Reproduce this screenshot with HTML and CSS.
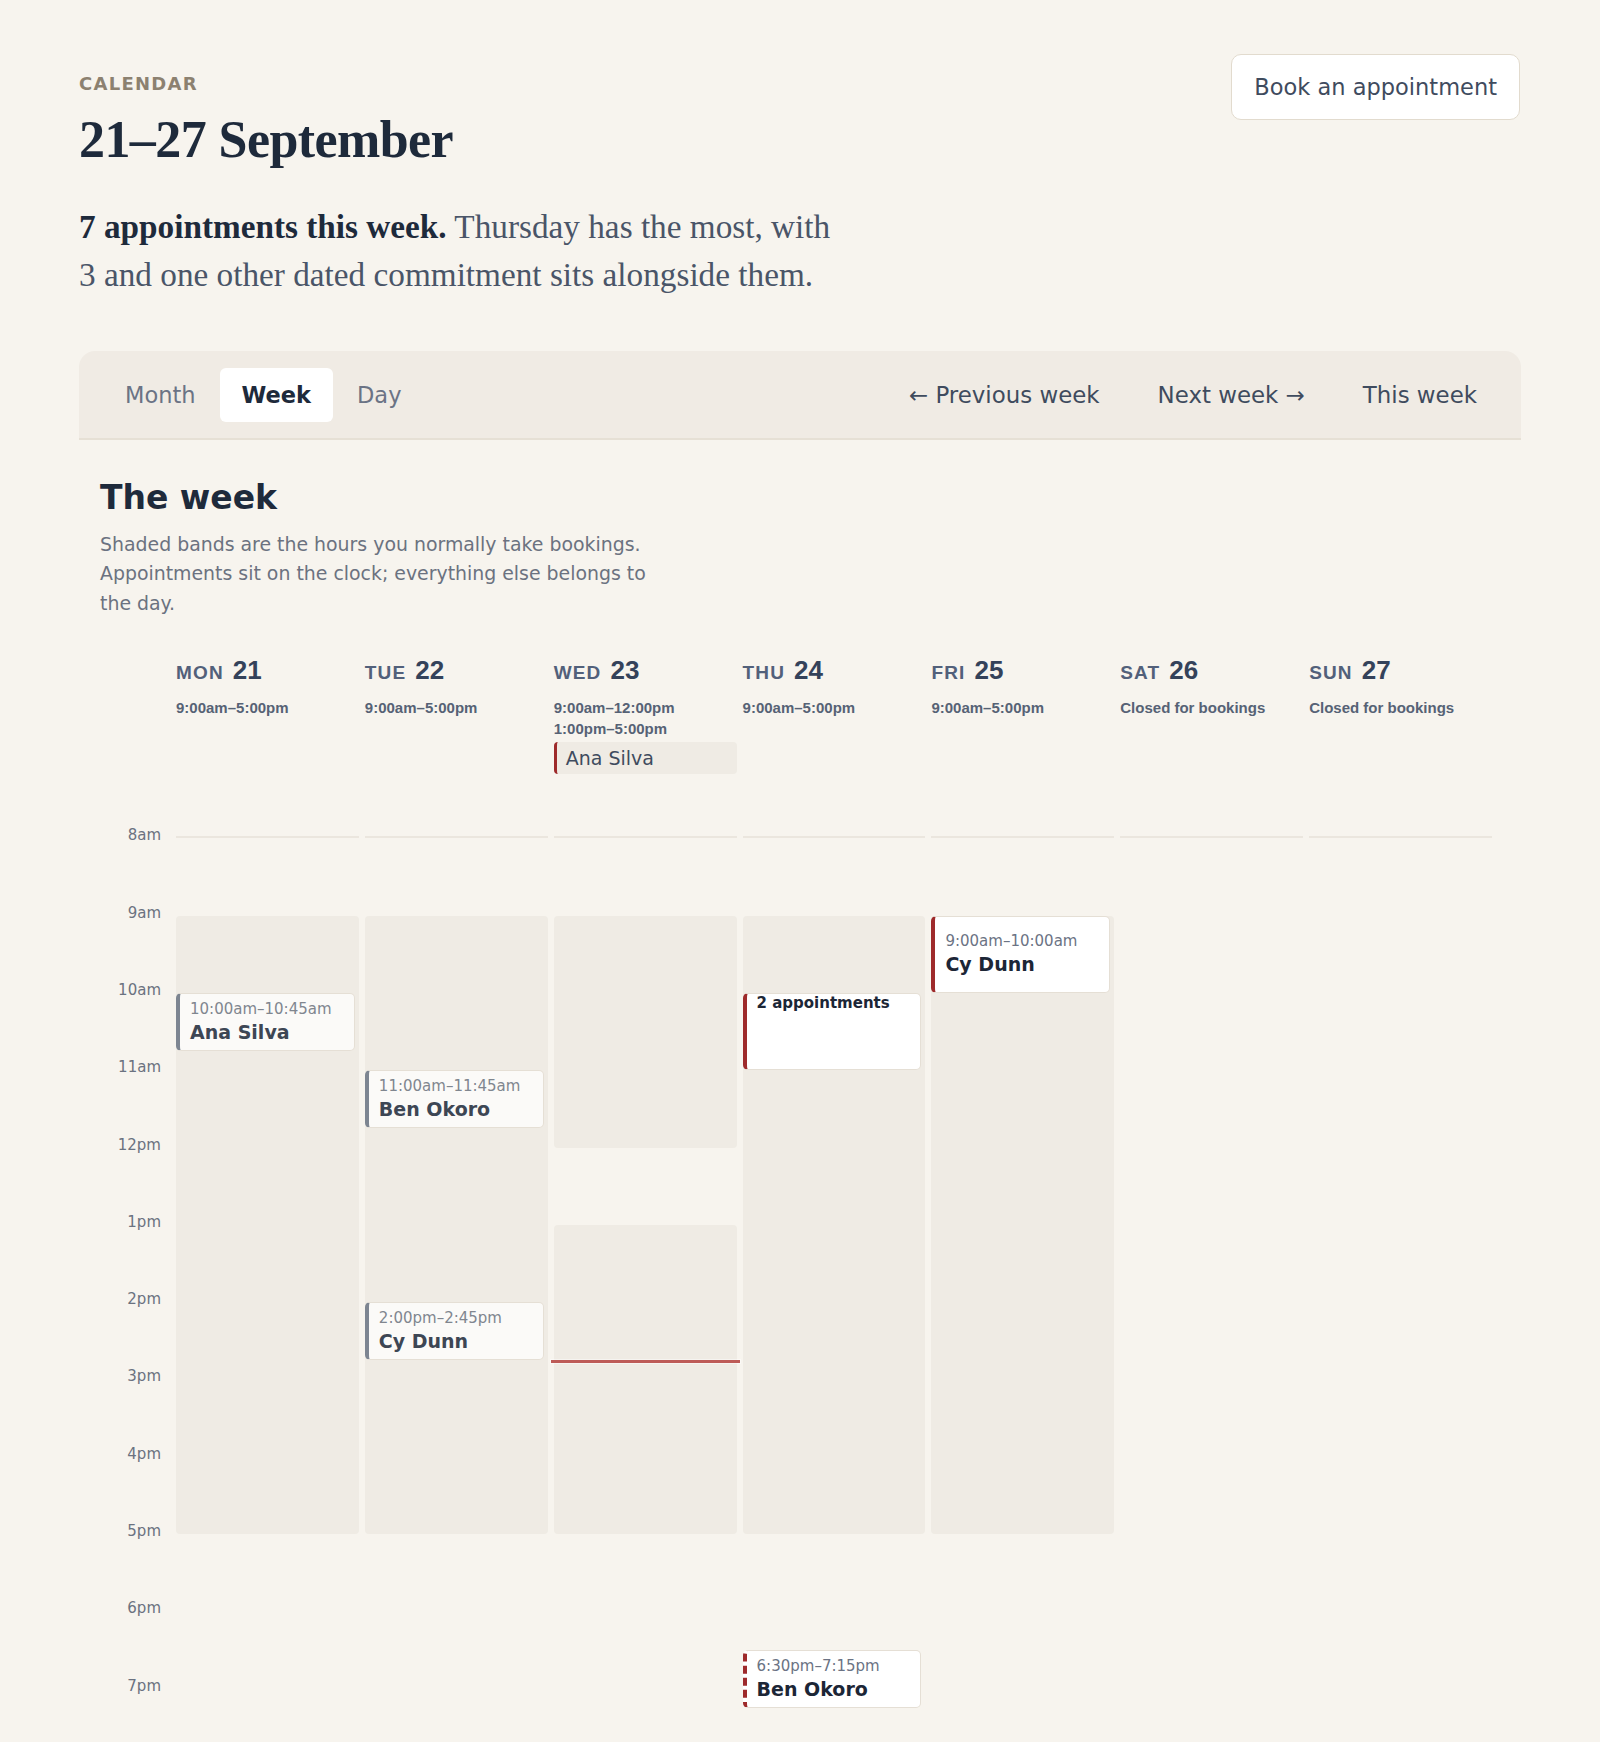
FILE: index.html
```html
<!DOCTYPE html>
<html lang="en">
<head>
<meta charset="utf-8">
<title>Calendar – 21–27 September</title>
<link rel="stylesheet" href="styles.css">
</head>
<body>
<div class="page">
  <header class="top">
    <div class="intro">
      <div class="eyebrow">CALENDAR</div>
      <h1 class="title">21–27 September</h1>
      <p class="summary"><strong>7 appointments this week.</strong> Thursday has the most, with 3 and one other dated commitment sits alongside them.</p>
    </div>
    <button class="btn-book" type="button">Book an appointment</button>
  </header>

  <nav class="toolbar">
    <div class="tabs">
      <button class="tab" type="button">Month</button>
      <button class="tab active" type="button">Week</button>
      <button class="tab" type="button">Day</button>
    </div>
    <div class="nav">
      <button class="nav-btn" type="button">← Previous week</button>
      <button class="nav-btn" type="button">Next week →</button>
      <button class="nav-btn" type="button">This week</button>
    </div>
  </nav>

  <section class="week">
    <h2 class="week-title">The week</h2>
    <p class="lede">Shaded bands are the hours you normally take bookings. Appointments sit on the clock; everything else belongs to the day.</p>

    <div class="days">
      <div class="corner"></div>
      <div class="day">
        <div class="day-name"><span class="dow">MON</span><span class="dnum">21</span></div>
        <div class="hours">9:00am–5:00pm</div>
      </div>
      <div class="day">
        <div class="day-name"><span class="dow">TUE</span><span class="dnum">22</span></div>
        <div class="hours">9:00am–5:00pm</div>
      </div>
      <div class="day">
        <div class="day-name"><span class="dow">WED</span><span class="dnum">23</span></div>
        <div class="hours">9:00am–12:00pm<br>1:00pm–5:00pm</div>
        <div class="chip">Ana Silva</div>
      </div>
      <div class="day">
        <div class="day-name"><span class="dow">THU</span><span class="dnum">24</span></div>
        <div class="hours">9:00am–5:00pm</div>
      </div>
      <div class="day">
        <div class="day-name"><span class="dow">FRI</span><span class="dnum">25</span></div>
        <div class="hours">9:00am–5:00pm</div>
      </div>
      <div class="day">
        <div class="day-name"><span class="dow">SAT</span><span class="dnum">26</span></div>
        <div class="hours">Closed for bookings</div>
      </div>
      <div class="day">
        <div class="day-name"><span class="dow">SUN</span><span class="dnum">27</span></div>
        <div class="hours">Closed for bookings</div>
      </div>
    </div>

    <div class="grid">
      <div class="gutter">
        <span class="hr-label" style="--s:0">8am</span>
        <span class="hr-label" style="--s:1">9am</span>
        <span class="hr-label" style="--s:2">10am</span>
        <span class="hr-label" style="--s:3">11am</span>
        <span class="hr-label" style="--s:4">12pm</span>
        <span class="hr-label" style="--s:5">1pm</span>
        <span class="hr-label" style="--s:6">2pm</span>
        <span class="hr-label" style="--s:7">3pm</span>
        <span class="hr-label" style="--s:8">4pm</span>
        <span class="hr-label" style="--s:9">5pm</span>
        <span class="hr-label" style="--s:10">6pm</span>
        <span class="hr-label" style="--s:11">7pm</span>
      </div>

      <div class="col">
        <div class="band" style="--s:1;--d:8"></div>
        <div class="ev past" style="--s:2;--d:0.75">
          <span class="ev-time">10:00am–10:45am</span>
          <span class="ev-name">Ana Silva</span>
        </div>
      </div>

      <div class="col">
        <div class="band" style="--s:1;--d:8"></div>
        <div class="ev past" style="--s:3;--d:0.75">
          <span class="ev-time">11:00am–11:45am</span>
          <span class="ev-name">Ben Okoro</span>
        </div>
        <div class="ev past" style="--s:6;--d:0.75">
          <span class="ev-time">2:00pm–2:45pm</span>
          <span class="ev-name">Cy Dunn</span>
        </div>
      </div>

      <div class="col">
        <div class="band" style="--s:1;--d:3"></div>
        <div class="band" style="--s:5;--d:4"></div>
        <div class="now" style="--s:6.77"></div>
      </div>

      <div class="col">
        <div class="band" style="--s:1;--d:8"></div>
        <div class="ev cluster" style="--s:2;--d:1">
          <span class="ev-count">2 appointments</span>
        </div>
        <div class="ev tentative" style="--s:10.5;--d:0.75">
          <span class="ev-time">6:30pm–7:15pm</span>
          <span class="ev-name">Ben Okoro</span>
        </div>
      </div>

      <div class="col">
        <div class="band" style="--s:1;--d:8"></div>
        <div class="ev" style="--s:1;--d:1">
          <span class="ev-time">9:00am–10:00am</span>
          <span class="ev-name">Cy Dunn</span>
        </div>
      </div>

      <div class="col"></div>
      <div class="col"></div>
    </div>
  </section>
</div>
</body>
</html>
```

FILE: styles.css
```css
:root {
  --hr: 77.3px;
  --bg: #f7f4ee;
  --shade: #efebe4;
  --ink: #1e2a3b;
  --slate: #3f4b5e;
  --muted: #6b7280;
  --red: #9e2a2b;
}

* {
  box-sizing: border-box;
}

html,
body {
  margin: 0;
  background: var(--bg);
}

body {
  font-family: "DejaVu Sans", "Noto Sans", sans-serif;
  color: var(--ink);
}

button {
  font-family: inherit;
  cursor: pointer;
}

.page {
  width: 1442px;
  margin: 0 auto;
  padding-top: 54px;
}

/* ---------- header ---------- */
.top {
  display: flex;
  justify-content: space-between;
  align-items: flex-start;
}

.intro {
  padding-top: 19px;
}

.eyebrow {
  font-size: 18px;
  line-height: 21.6px;
  font-weight: 700;
  letter-spacing: 0.07em;
  color: #8c8170;
}

.title {
  margin: 15px 0 0;
  font-family: "Liberation Serif", "Times New Roman", serif;
  font-size: 52px;
  line-height: 60px;
  font-weight: 700;
  letter-spacing: -0.011em;
  color: var(--ink);
}

.summary {
  margin: 33px 0 0;
  max-width: 770px;
  font-family: "Liberation Serif", "Times New Roman", serif;
  font-size: 33.25px;
  line-height: 48px;
  color: #4a5568;
}

.summary strong {
  color: var(--ink);
}

.btn-book {
  margin-right: 1px;
  font-size: 22.5px;
  line-height: 26px;
  padding: 19px 22px;
  background: #fff;
  color: var(--slate);
  border: 1px solid #e2dbce;
  border-radius: 10px;
}

/* ---------- toolbar ---------- */
.toolbar {
  margin-top: 52px;
  display: flex;
  justify-content: space-between;
  align-items: center;
  background: #f0ebe4;
  border-radius: 16px 16px 0 0;
  border-bottom: 2px solid #e6e0d5;
  padding: 17px 22px 16px 24px;
}

.tabs,
.nav {
  display: flex;
}

.tabs {
  gap: 2px;
}

.nav {
  gap: 14px;
}

.tab,
.nav-btn {
  font-size: 22.5px;
  line-height: 26px;
  padding: 14px 22px;
  border: 0;
  border-radius: 6px;
  background: transparent;
}

.tab {
  color: #6b7385;
}

.tab.active {
  background: #fff;
  color: var(--ink);
  font-weight: 700;
}

.nav-btn {
  font-size: 22.9px;
  color: var(--slate);
}

/* ---------- week section ---------- */
.week {
  padding: 0 21px;
}

.week-title {
  margin: 38px 0 0;
  font-size: 33px;
  line-height: 40px;
  font-weight: 700;
  color: var(--ink);
}

.lede {
  margin: 12px 0 0;
  max-width: 565px;
  font-size: 18.9px;
  line-height: 29.6px;
  color: var(--muted);
}

.days,
.grid {
  display: grid;
  grid-template-columns: 70px repeat(7, 1fr);
  column-gap: 6px;
  padding-right: 8px;
}

.days {
  margin-top: 37px;
  align-items: start;
  font-family: "Liberation Sans", Arial, sans-serif;
}

.day-name {
  display: flex;
  align-items: baseline;
  gap: 9px;
  line-height: 31px;
}

.dow {
  font-size: 19px;
  font-weight: 700;
  letter-spacing: 0.06em;
  color: #52607a;
}

.dnum {
  font-size: 26px;
  font-weight: 700;
  color: #34425a;
}

.hours {
  margin-top: 9px;
  font-size: 15px;
  line-height: 21px;
  font-weight: 700;
  color: #566275;
}

.chip {
  margin-top: 3px;
  padding: 3px 9px;
  background: var(--shade);
  border-left: 3px solid var(--red);
  border-radius: 4px;
  font-family: "DejaVu Sans", sans-serif;
  font-size: 19px;
  line-height: 26px;
  color: var(--slate);
}

/* ---------- time grid ---------- */
.grid {
  margin-top: 62px;
  height: 906px;
}

.gutter {
  position: relative;
  border-top: 2px solid transparent;
}

.hr-label {
  position: absolute;
  right: 9px;
  top: calc(var(--s) * var(--hr) - 13px);
  font-size: 15px;
  line-height: 20px;
  color: var(--muted);
  white-space: nowrap;
}

.col {
  position: relative;
  border-top: 2px solid #ebe6de;
}

.band {
  position: absolute;
  left: 0;
  right: 0;
  top: calc(var(--s) * var(--hr));
  height: calc(var(--d) * var(--hr));
  background: var(--shade);
  border-radius: 4px;
}

.now {
  position: absolute;
  left: -3px;
  right: -3px;
  top: calc(var(--s) * var(--hr) - 1.5px);
  height: 3px;
  background: #bd5b57;
  box-shadow: 0 0 0 1px rgba(255, 255, 255, 0.45);
  z-index: 2;
}

.ev {
  position: absolute;
  left: 0;
  right: 4px;
  top: calc(var(--s) * var(--hr));
  height: calc(var(--d) * var(--hr));
  display: flex;
  flex-direction: column;
  justify-content: center;
  padding: 0 10px;
  background: #fff;
  border: 1px solid #e5dfd5;
  border-left: 4px solid var(--red);
  border-radius: 5px;
  z-index: 1;
  overflow: hidden;
}

.ev-time {
  font-size: 15px;
  line-height: 20px;
  color: #6b7384;
  white-space: nowrap;
}

.ev-name {
  font-size: 19px;
  line-height: 26px;
  font-weight: 700;
  color: #1c2636;
  white-space: nowrap;
}

.ev.past {
  background: #fbfaf8;
  border-left-color: #7d8591;
}

.ev.past .ev-time {
  color: #80868f;
}

.ev.past .ev-name {
  color: #3d4654;
}

.ev.cluster {
  justify-content: flex-start;
  padding-top: 0;
}

.ev-count {
  font-size: 15px;
  line-height: 18px;
  font-weight: 700;
  color: #1c2636;
}

.ev.tentative {
  border-left-style: dashed;
}
```
